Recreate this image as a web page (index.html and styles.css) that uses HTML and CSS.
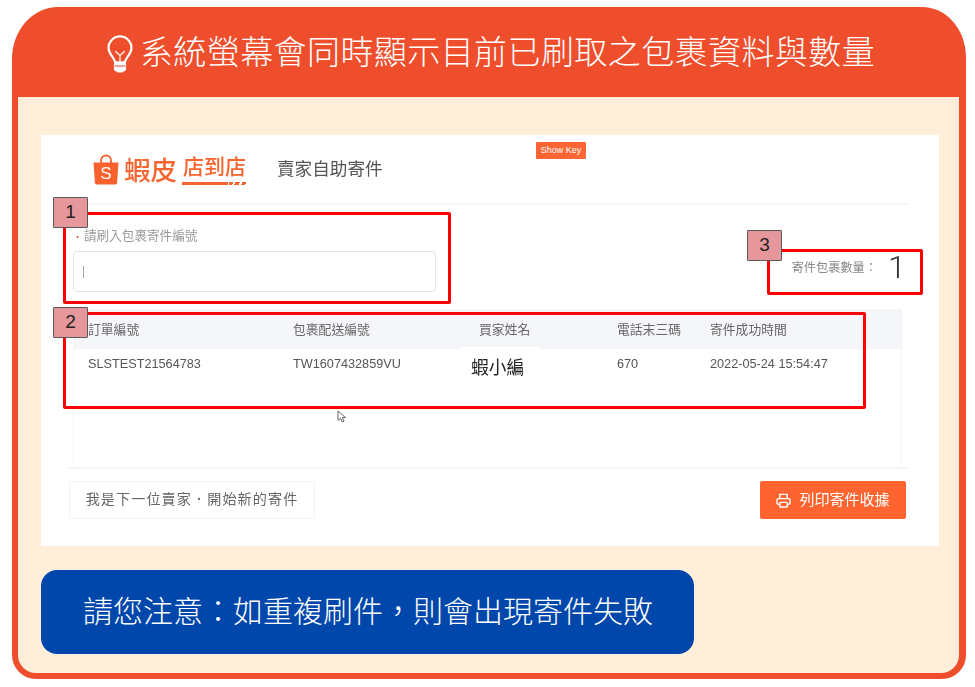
FILE: index.html
```html
<!DOCTYPE html>
<html lang="zh-Hant">
<head>
<meta charset="utf-8">
<title>系統螢幕會同時顯示目前已刷取之包裹資料與數量</title>
<link rel="stylesheet" href="styles.css">
</head>
<body>
<main class="frame">
  <header class="banner">
    <svg class="bulb" viewBox="0 0 26 38" width="26" height="38" fill="none" stroke="#fff" stroke-width="2.2" stroke-linecap="round" stroke-linejoin="round">
      <path d="M8.2 27.5C8 23 2 20 1.6 13.4A11.4 11.4 0 0 1 13 1.4a11.4 11.4 0 0 1 11.4 12c-.4 6.6-6.4 9.6-6.6 14.1z"/>
      <path d="M8.6 16.5l4.4 4 4.4-4M13 20.5v7" stroke-width="1.2"/>
      <rect x="8" y="27.5" width="10" height="8" rx="2" fill="#fff"/>
      <path d="M8 31h10" stroke="#ee4d2d" stroke-width="1.2"/>
      <path d="M11 36.6h4" stroke-width="1.8"/>
    </svg>
    <h1 class="banner-title">系統螢幕會同時顯示目前已刷取之包裹資料與數量</h1>
  </header>
  <div class="body">
    <section class="panel">
      <div class="shot">
        <div class="shot-head">
          <div class="logo">
            <svg class="bag" viewBox="0 0 26 31" width="26" height="31">
              <path d="M8 9V6.5a5 5 0 0 1 10 0V9" fill="none" stroke="#f9622d" stroke-width="1.8"/>
              <path d="M0.500 8.500h25l-1.400 20.300a2 2 0 0 1-2 1.800H3.900a2 2 0 0 1-2-1.800z" fill="#f9622d"/>
              <text x="13" y="25" text-anchor="middle" class="bag-s">S</text>
            </svg>
            <span class="logo-main">蝦皮</span>
            <span class="logo-sub">店到店</span>
          </div>
          <span class="shot-title">賣家自助寄件</span>
        </div>
        <div class="scan-row">
          <div class="scan-field">
            <div class="field-label"><span class="req">•</span>請刷入包裹寄件編號</div>
            <div class="field-input"><span class="caret"></span></div>
          </div>
          <div class="count"><span class="count-label">寄件包裹數量：</span><span class="count-num">1</span></div>
        </div>
        <div class="table">
          <div class="tr th">
            <span>訂單編號</span><span>包裹配送編號</span><span>買家姓名</span><span>電話末三碼</span><span>寄件成功時間</span>
          </div>
          <div class="tr td">
            <span>SLSTEST21564783</span><span>TW1607432859VU</span><span class="name">蝦小編</span><span>670</span><span>2022-05-24 15:54:47</span>
          </div>
        </div>
        <div class="shot-foot">
          <button class="btn-next">我是下一位賣家．開始新的寄件</button>
          <button class="btn-print">
            <svg viewBox="0 0 16 16" width="15" height="15" fill="none" stroke="#fff" stroke-width="1.5" stroke-linejoin="round">
              <path d="M4 6V1.500h8V6"/>
              <rect x="1" y="6" width="14" height="6" rx="1.500"/>
              <rect x="4" y="10" width="8" height="5" rx="1" fill="#fd6430"/>
            </svg>
            <span class="print-label">列印寄件收據</span>
          </button>
        </div>
      </div>
      <span class="show-key">Show Key</span>
      <div class="mark mark-one"></div>
      <div class="mark mark-two"></div>
      <div class="mark mark-three"></div>
      <span class="tag tag-one">1</span>
      <span class="tag tag-two">2</span>
      <span class="tag tag-three">3</span>
      <svg class="pointer" viewBox="0 0 10 13" width="10" height="13">
        <path d="M1 1v9.500l2.500-2.200 1.700 3.700 1.800-.8-1.700-3.600h3.200z" fill="#fff" stroke="#555" stroke-width=".9" stroke-linejoin="round"/>
      </svg>
    </section>
    <div class="notice">請您注意：如重複刷件，則會出現寄件失敗</div>
  </div>
</main>
</body>
</html>
```
FILE: styles.css
```css
* { box-sizing: border-box; }
html, body { margin: 0; padding: 0; background: #fff; }
body {
  width: 975px;
  height: 687px;
  overflow: hidden;
  font-family: "Noto Sans CJK TC", "Liberation Sans", sans-serif;
}
.frame {
  width: 954px;
  height: 672px;
  margin: 7px 0 0 12px;
  padding: 0 7px 6px 6px;
  background: #ef4e2c;
  border-radius: 46px 44px 24px 24px / 52px 50px 24px 24px;
  display: flex;
  flex-direction: column;
}
.banner {
  height: 90px;
  flex: none;
  display: flex;
  align-items: center;
  justify-content: center;
  gap: 7px;
  padding: 0 0 4px 5px;
}
.bulb { flex: none; margin-top: 7px; }
.banner-title {
  margin: 0;
  font-size: 33px;
  font-weight: 300;
  letter-spacing: .42px;
  line-height: 1;
  color: #fff;
  white-space: nowrap;
}
.body {
  flex: 1;
  background: #feeeda;
  border-radius: 0 0 18px 18px;
  padding: 38px 20px 0 23px;
  display: flex;
  flex-direction: column;
  gap: 24px;
}
.panel {
  position: relative;
  width: 898px;
  height: 411px;
  background: #fff;
  flex: none;
}
.shot {
  height: 100%;
  display: flex;
  flex-direction: column;
  filter: blur(.5px);
}
.shot-head {
  height: 70px;
  margin: 0 30px 0 26px;
  padding: 18px 0 0 26px;
  border-bottom: 2px solid #f6f6f6;
  display: flex;
  align-items: flex-start;
  flex: none;
}
.logo {
  width: 184px;
  height: 33px;
  display: flex;
  align-items: center;
  color: #f8642f;
}
.bag { flex: none; }
.bag-s { font: 17px "Liberation Sans", sans-serif; fill: #fff; }
.logo-main {
  margin-left: 5px;
  font-size: 26.500px;
  font-weight: 500;
  line-height: 33px;
  padding-bottom: 2px;
}
.logo-sub {
  margin-left: 5px;
  width: 65px;
  height: 31px;
  padding-left: 1px;
  font-size: 21px;
  line-height: 23px;
  font-weight: 500;
  white-space: nowrap;
  background:
    linear-gradient(#f8642f, #f8642f) left bottom / 46px 3px no-repeat,
    repeating-linear-gradient(115deg, #f8642f 0 4px, transparent 4px 6px) right bottom / 18px 3px no-repeat;
}
.shot-title {
  font-size: 17.600px;
  line-height: 24px;
  margin-top: 3px;
  color: #555;
}
.scan-row {
  height: 104px;
  flex: none;
  padding: 21px 38px 0 32px;
  display: flex;
  justify-content: space-between;
}
.field-label {
  font-size: 12.600px;
  line-height: 18px;
  color: #999;
  white-space: nowrap;
}
.req { color: #ee4d2d; margin-right: 2px; font-size: 9px; }
.field-input {
  width: 363px;
  height: 41px;
  margin-top: 5px;
  border: 1px solid #e3e3e6;
  border-radius: 4px;
  padding: 14px 0 0 9px;
}
.caret { display: block; width: 1px; height: 12px; background: #aaa; }
.count {
  display: flex;
  align-items: center;
  height: 40px;
  margin-top: 21px;
  gap: 11px;
}
.count-label { font-size: 12.200px; color: #888; white-space: nowrap; }
.count-num {
  width: 13px;
  font: 300 32px "Roboto", "Liberation Sans", sans-serif;
  color: #333;
}
.table {
  width: 829px;
  height: 158px;
  margin-left: 32px;
  border-left: 1px solid #f5f5f5;
  border-right: 1px solid #f5f5f5;
  flex: none;
}
.tr {
  display: grid;
  grid-template-columns: 205px 186px 138px 93px 1fr;
  padding-left: 14px;
}
.th {
  height: 40px;
  padding-bottom: 2px;
  align-items: center;
  background: #f5f6f9;
  font-size: 12.800px;
  color: #666;
}
.td {
  height: 40px;
  padding-top: 6px;
  font: 12.700px/18px "Liberation Sans", sans-serif;
  color: #555;
}
.name {
  width: 80px;
  height: 40px;
  margin: -8px 0 0 -18px;
  padding: 6px 0 0 10px;
  background: #fff;
  font: 17.700px/26px "Noto Sans CJK TC", sans-serif;
  color: #222;
  white-space: nowrap;
}
.shot-foot {
  flex: 1;
  margin: 0 30px 0 25px;
  border-top: 2px solid #f6f6f6;
  padding: 12px 3px 0 3px;
  display: flex;
  align-items: flex-start;
  justify-content: space-between;
}
.btn-next {
  width: 246px;
  height: 38px;
  padding: 0 0 4px;
  background: #fff;
  border: 1px solid #f3f3f3;
  border-radius: 2px;
  font: 14.100px "Noto Sans CJK TC", sans-serif;
  letter-spacing: 1.100px;
  color: #666;
}
.btn-print {
  width: 146px;
  height: 38px;
  padding: 0;
  background: #fd6430;
  border: 0;
  border-radius: 2px;
  color: #fff;
  font: 15px "Noto Sans CJK TC", sans-serif;
  display: flex;
  align-items: center;
  justify-content: center;
  gap: 8px;
}
.print-label { margin-top: -4px; }
.show-key {
  position: absolute;
  left: 495px;
  top: 7px;
  width: 50px;
  height: 17px;
  background: #fb6533;
  border-radius: 1px;
  color: #fff;
  font: 9px/17px "Liberation Sans", sans-serif;
  text-align: center;
}
.mark {
  position: absolute;
  border: 3px solid #ff0000;
  border-radius: 2px;
}
.mark-one { left: 22px; top: 77px; width: 388px; height: 92px; }
.mark-two { left: 22px; top: 177px; width: 803px; height: 97px; }
.mark-three { left: 726px; top: 114px; width: 156px; height: 46px; }
.tag {
  position: absolute;
  width: 35px;
  height: 31px;
  background: #e6979b;
  border: 1px solid #5a5a5a;
  border-radius: 1px;
  color: #222;
  font: 19px/28px "Liberation Sans", sans-serif;
  text-align: center;
}
.tag-one { left: 12px; top: 62px; }
.tag-two { left: 12px; top: 172px; }
.tag-three { left: 706px; top: 95px; }
.pointer { position: absolute; left: 296px; top: 275px; }
.notice {
  width: 653px;
  height: 84px;
  flex: none;
  background: #0047ab;
  border-radius: 16px;
  padding-left: 42px;
  color: #fff;
  font-size: 30px;
  font-weight: 300;
  line-height: 78px;
  white-space: nowrap;
}
```
